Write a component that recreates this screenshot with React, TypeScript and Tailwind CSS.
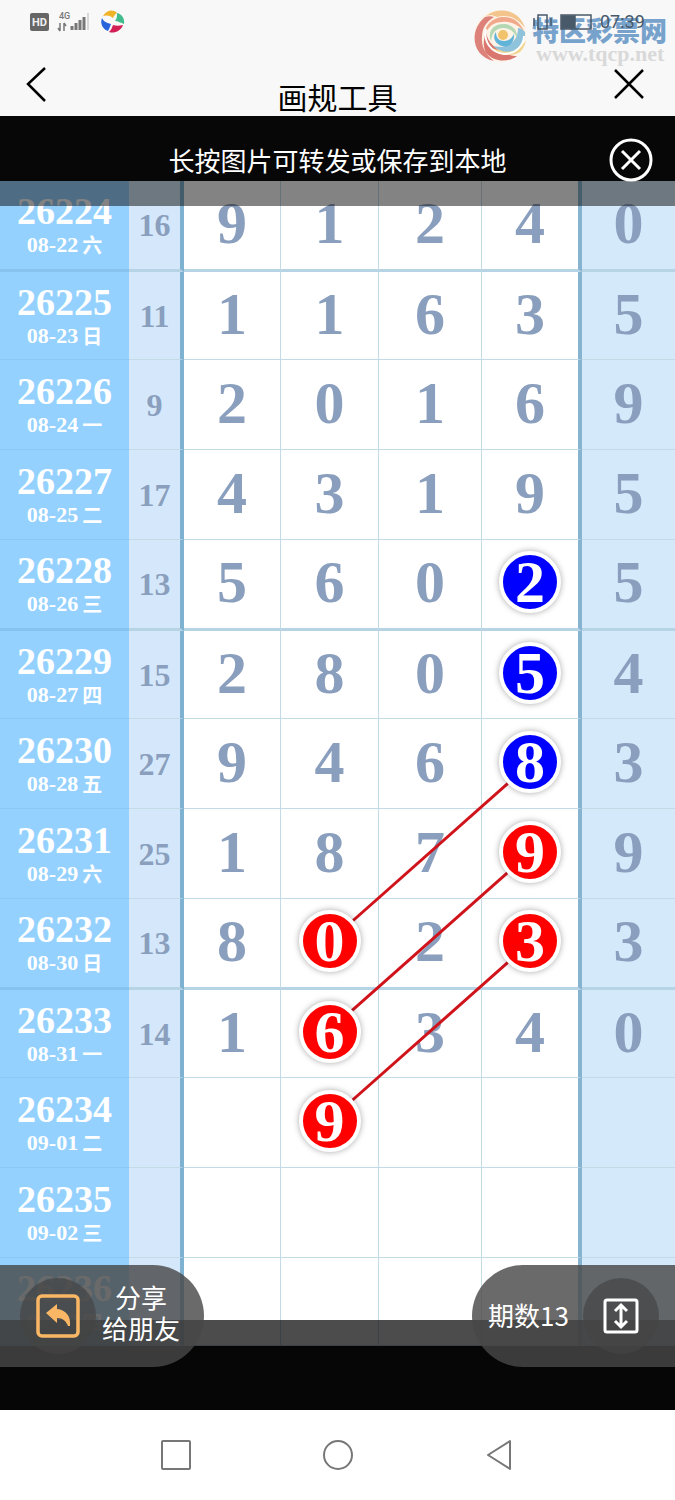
import clsx from 'clsx';

type Mark = 'red' | 'blue';

interface Draw {
    issue: string;
    date: string;
    day: string;
    sum?: number;
    digits: string;
    marks?: Record<number, Mark>;
}

const draws: Draw[] = [
    { issue: '26224', date: '08-22', day: '六', sum: 16, digits: '91240' },
    { issue: '26225', date: '08-23', day: '日', sum: 11, digits: '11635' },
    { issue: '26226', date: '08-24', day: '一', sum: 9, digits: '20169' },
    { issue: '26227', date: '08-25', day: '二', sum: 17, digits: '43195' },
    { issue: '26228', date: '08-26', day: '三', sum: 13, digits: '56025', marks: { 3: 'blue' } },
    { issue: '26229', date: '08-27', day: '四', sum: 15, digits: '28054', marks: { 3: 'blue' } },
    { issue: '26230', date: '08-28', day: '五', sum: 27, digits: '94683', marks: { 3: 'blue' } },
    { issue: '26231', date: '08-29', day: '六', sum: 25, digits: '18799', marks: { 3: 'red' } },
    { issue: '26232', date: '08-30', day: '日', sum: 13, digits: '80233', marks: { 1: 'red', 3: 'red' } },
    { issue: '26233', date: '08-31', day: '一', sum: 14, digits: '16340', marks: { 1: 'red' } },
    { issue: '26234', date: '09-01', day: '二', digits: ' 9   ', marks: { 1: 'red' } },
    { issue: '26235', date: '09-02', day: '三', digits: '     ' },
    { issue: '26236', date: '09-03', day: '四', digits: '     ' },
];

function StatusIcons() {
    return (
        <div className="flex items-center gap-2">
            <span className="flex h-[18px] w-[19px] items-center justify-center rounded-xs bg-[#666] font-['Roboto'] text-[11px] leading-none font-bold text-[#f0f0f0]">
                HD
            </span>
            <div className="relative h-6 w-8">
                <span className="absolute top-0.5 left-0.5 font-['Roboto'] text-[9px] leading-none font-medium text-[#777]">4G</span>
                <svg className="absolute inset-0 h-full w-full" viewBox="0 0 32 24" fill="none" stroke="#777" strokeWidth="1.5">
                    <path d="M3 13v8M1 18l2 3M7 21v-8M9 16l-2-3" />
                    <path strokeWidth="3" d="M15 20v-4M19 20v-7M23 20v-10M27 20V7" />
                    <path stroke="#d8d8d8" strokeWidth="2" d="M31 20V3" />
                </svg>
            </div>
            <svg className="ml-1 h-6 w-6" viewBox="0 0 24 24">
                <path fill="#f0b429" d="M2 6C6 0 12-1 16 3c-2 1-3 3-4 5C9 5 5 5 2 6z" />
                <path fill="#43bc8c" d="M16 3c5 1 8 6 7 11-3-1-6-3-9-3 2-2 2-5 2-8z" />
                <path fill="#d21f55" d="M22 15c-2 6-9 9-14 7 2-2 3-4 4-7 3 1 6 1 10 0z" />
                <path fill="#2864dc" d="M1 8c1 3 4 5 9 6-1 3-2 5-3 7C1 19-1 13 1 8z" />
            </svg>
        </div>
    );
}

function Watermark() {
    return (
        <div className="flex items-start">
            <svg className="h-14 w-14 shrink-0" viewBox="0 0 56 56">
                <circle cx="28" cy="28" r="26" fill="#fdf3e6" />
                <path fill="#dd827a" d="M13 9C-3 22-1 48 22 53c-8-6-13-14-12-24 0-9 4-15 12-20-3-1-6-1-9 0z" />
                <path fill="#f3c58c" d="M14 8C28-3 48 3 53 20 45 9 34 6 25 9 21 7 18 7 14 8z" />
                <path fill="#f0a98a" d="M13 26c0-10 8-16 17-17 10-1 18 5 22 14-7-7-14-10-22-9-8 0-13 4-17 12z" />
                <path fill="#d9776f" d="M14 45c8 9 22 10 31 3-5 0-13-2-18-6-8-5-12-11-13-18-3 8-3 15 0 21z" />
                <path fill="#f1d68f" d="M20 40c8 8 20 9 28 4 3-3 5-7 6-11-7 9-22 12-34 7z" />
                <path fill="#8fc3dc" d="M53 24c1 9-4 16-12 19-7 2-14 0-20-5 12 3 25-2 25-18 3 0 5 2 7 4z" />
                <path fill="#b5d8b4" d="M19 33c-4-10 3-17 12-17s15 6 14 14c-3-7-8-10-14-10-7 0-11 5-12 13z" />
                <path fill="#62b3d8" d="M42 26c1 9-6 14-12 12-7-2-10-9-6-14 0 6 3 9 8 9s8-3 10-7z" />
                <path fill="none" stroke="#fff" strokeWidth="2" d="M14 21c-3 13 6 24 18 25 12 0 20-9 20-18" />
                <circle cx="31" cy="27" r="5" fill="#f2c36a" />
            </svg>
            <div className="relative mt-2 ml-1">
                <div className="font-['Noto_Sans_CJK_SC',sans-serif] text-[27px] leading-7 font-black text-[#76a2cc]">特区彩票网</div>
                <div className="pl-1 font-['Liberation_Serif',serif] text-[22px] leading-5 font-bold text-[#d9d9d9]">www.tqcp.net</div>
                {/* battery and clock show through the site mark */}
                <div className="absolute -top-0.5 left-0 flex h-4 items-center gap-2 text-[#48596a]">
                    <svg className="h-4 w-15" viewBox="0 0 60 16" fill="none" stroke="currentColor" strokeWidth="1.5">
                        <path d="M6 1h9v14H6zM2 4v8M19 4v8" />
                        <path d="M29 1h30v14H29z" />
                        <path fill="currentColor" d="M30 2h13v12H30z" />
                    </svg>
                    <span className="font-['Roboto',sans-serif] text-lg leading-4">07:39</span>
                </div>
            </div>
        </div>
    );
}

function Ball({ value, mark }: { value: string; mark: Mark }) {
    return (
        <span
            className={clsx(
                'relative z-20 flex size-[62px] items-center justify-center rounded-full border-4 border-white text-white shadow-[0_0_6px_rgba(0,0,0,0.35)]',
                mark === 'red' ? 'bg-[#fe0000]' : 'bg-[#0000fe]',
            )}
        >
            {value}
        </span>
    );
}

function DrawRow({ draw, index }: { draw: Draw; index: number }) {
    const last = index === draws.length - 1;
    const thick = index % 4 === 0 && !last;
    const line = clsx(
        thick ? 'h-[91px] border-b-3 border-b-[#b7d3e6]' : 'border-b border-b-[#c3dbe6]',
        !thick && (index % 4 === 1 || last ? 'h-[88px]' : 'h-[90px]'),
    );

    return (
        <tr>
            <th scope="row" className={clsx(line, 'bg-[#94d1ff] p-0 pt-1 font-bold text-white', thick ? 'border-b-[#88c3ef]!' : 'border-b-[#8bc8f5]!')}>
                <div className="text-[38px] leading-9">{draw.issue}</div>
                <div className="flex items-center justify-center gap-1 text-[22px] leading-8">
                    {draw.date}
                    <span className="font-['Noto_Sans_CJK_SC',sans-serif] text-xl leading-8">{draw.day}</span>
                </div>
            </th>
            <td className={clsx(line, 'border-r-4 border-r-[#7fb1d0] bg-[#d5e8fb] p-0 text-center text-[32px] leading-8')}>{draw.sum}</td>
            {draw.digits.split('').map((digit, i) => (
                <td
                    key={i}
                    className={clsx(
                        line,
                        'p-0 pb-1 text-[60px] leading-none',
                        i < 3 && 'border-r border-r-[#c3dbe6]',
                        i === 3 && 'border-r-4 border-r-[#85b3d0]',
                        i === 4 ? 'bg-[#d4e9fa]' : 'bg-white',
                    )}
                >
                    <div className="flex items-center justify-center">
                        {draw.marks?.[i] ? <Ball value={digit} mark={draw.marks[i]} /> : digit}
                    </div>
                </td>
            ))}
        </tr>
    );
}

function Chart() {
    return (
        <div className="relative font-['Liberation_Serif',serif] font-bold text-[#8a9fbd]">
            <table className="w-full table-fixed border-separate border-spacing-0">
                <colgroup>
                    <col className="w-[129px]" />
                    <col className="w-[55px]" />
                    <col className="w-[97px]" />
                    <col className="w-[98px]" />
                    <col className="w-[103px]" />
                    <col className="w-[100px]" />
                    <col className="w-[93px]" />
                </colgroup>
                <tbody>
                    {draws.map((draw, index) => (
                        <DrawRow key={draw.issue} draw={draw} index={index} />
                    ))}
                </tbody>
            </table>
            <svg
                className="pointer-events-none absolute inset-0 z-10 h-full w-full"
                viewBox="0 0 675 1165"
                preserveAspectRatio="none"
                stroke="#d0141c"
                strokeWidth="3"
            >
                <path d="M531 582L330 760M531 671L330 849M531 761L330 939" />
            </svg>
        </div>
    );
}

export default function App() {
    return (
        <div className="min-h-screen bg-white font-['Noto_Sans_CJK_SC',sans-serif] text-black">
            <header className="h-[116px] bg-[#f8f8f8]">
                <div className="flex h-[62px] items-start justify-between pr-2 pl-[30px]">
                    <div className="pt-[10px]">
                        <StatusIcons />
                    </div>
                    <div className="pt-2">
                        <Watermark />
                    </div>
                </div>
                <div className="grid grid-cols-[1fr_auto_1fr] items-start px-3">
                    <button type="button" aria-label="返回" className="flex h-11 w-12 items-center justify-center">
                        <svg className="h-9 w-6" viewBox="0 0 24 36" fill="none" stroke="#000" strokeWidth="2.5">
                            <path d="M21 2L4 18l17 17" />
                        </svg>
                    </button>
                    <h1 className="pt-3.5 text-[30px] leading-10">画规工具</h1>
                    <button type="button" aria-label="关闭" className="mr-2.5 flex h-11 w-12 items-center justify-center justify-self-end">
                        <svg className="h-8 w-8" viewBox="0 0 32 32" fill="none" stroke="#000" strokeWidth="2.5">
                            <path d="M2 2l28 28M30 2L2 30" />
                        </svg>
                    </button>
                </div>
            </header>

            <main className="relative bg-[#070707] pt-[65px] pb-16">
                <Chart />

                <div className="absolute inset-x-0 top-0 z-30 flex h-[90px] items-center justify-center bg-[#070707]/50 pb-0.5">
                    <p className="text-[26px] leading-[88px] text-white">长按图片可转发或保存到本地</p>
                    <button type="button" aria-label="关闭图片" className="absolute right-[22px]">
                        <svg className="size-11" viewBox="0 0 44 44" fill="none" stroke="#fff" strokeWidth="3">
                            <circle cx="22" cy="22" r="20" />
                            <path d="M13 13l18 18M31 13L13 31" />
                        </svg>
                    </button>
                </div>

                <div className="absolute inset-x-0 bottom-0 z-30 h-[90px] bg-[#070707]/72" />

                <div className="absolute inset-x-0 bottom-[43px] z-40 flex justify-between text-[26px] leading-[31px] text-white">
                    <button type="button" className="flex h-[102px] w-[204px] items-center gap-1 rounded-r-full bg-[#484848]/81 pl-5">
                        <span className="flex size-19 items-center justify-center rounded-full bg-[#444]/70">
                            <svg className="size-11" viewBox="0 0 44 44" fill="none">
                                <rect x="2" y="2" width="40" height="40" rx="4" stroke="#f9b765" strokeWidth="3.5" />
                                <path fill="#f9b765" d="M10 19L21 10v5c9 1 14 7 13 17h-2c-2-5-5-8-11-8v5z" />
                            </svg>
                        </span>
                        <span className="flex w-[82px] flex-col items-center pb-2">
                            <span>分享</span>
                            <span>给朋友</span>
                        </span>
                    </button>
                    <button type="button" className="flex h-[102px] w-[203px] items-center justify-between rounded-l-full bg-[#484848]/81 px-4">
                        <span className="pb-1">期数13</span>
                        <span className="flex size-19 items-center justify-center rounded-full bg-[#444]/70">
                            <svg className="size-9" viewBox="0 0 36 36" fill="none" stroke="#fff" strokeWidth="3">
                                <rect x="2" y="2" width="32" height="32" rx="2" />
                                <path d="M18 8v20M12 13l6-6 6 6M12 23l6 6 6-6" />
                            </svg>
                        </span>
                    </button>
                </div>
            </main>

            <nav className="flex h-[90px] items-center justify-center gap-[130px]">
                <button type="button" aria-label="最近任务">
                    <svg className="size-8" viewBox="0 0 32 32" fill="none" stroke="#777" strokeWidth="2">
                        <rect x="2" y="2" width="28" height="28" rx="1" />
                    </svg>
                </button>
                <button type="button" aria-label="主页">
                    <svg className="size-8" viewBox="0 0 32 32" fill="none" stroke="#777" strokeWidth="2">
                        <circle cx="16" cy="16" r="14" />
                    </svg>
                </button>
                <button type="button" aria-label="后退">
                    <svg className="size-8" viewBox="0 0 32 32" fill="none" stroke="#777" strokeWidth="2" strokeLinejoin="round">
                        <path d="M26 2v28L4 16z" />
                    </svg>
                </button>
            </nav>
        </div>
    );
}
